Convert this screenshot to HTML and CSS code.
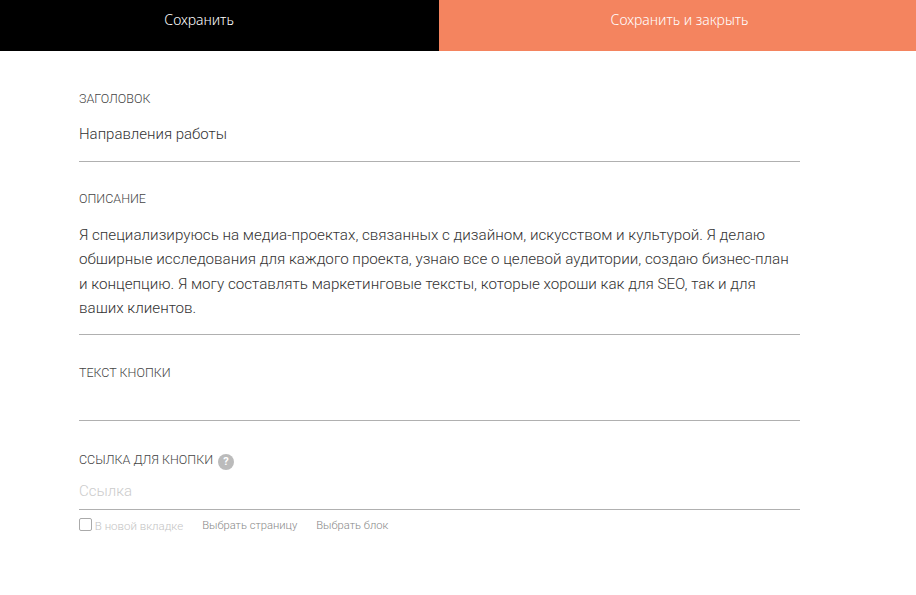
FILE: index.html
```html
<!DOCTYPE html>
<html lang="ru">
<head>
    <meta charset="UTF-8">
    <meta name="viewport" content="width=device-width, initial-scale=1.0">
    <title>Редактирование блока</title>
    <link rel="stylesheet" href="styles.css">
</head>
<body>

    <!-- Save buttons -->
    <div class="topbar">
        <button class="save-btn save">Сохранить</button>
        <button class="save-btn save-close">Сохранить и закрыть</button>
    </div>

    <form class="form">
        <div class="field field-title">
            <label class="field-label">Заголовок</label>
            <div class="field-value">Направления работы</div>
        </div>

        <div class="field field-descr">
            <label class="field-label">Описание</label>
            <div class="field-text">Я специализируюсь на медиа-проектах, связанных с дизайном, искусством и культурой. Я делаю обширные исследования для каждого проекта, узнаю все о целевой аудитории, создаю бизнес-план и концепцию. Я могу составлять маркетинговые тексты, которые хороши как для SEO, так и для ваших клиентов.</div>
        </div>

        <div class="field field-btn">
            <label class="field-label">Текст кнопки</label>
            <div class="field-value empty"></div>
        </div>

        <div class="field field-link">
            <label class="field-label">Ссылка для кнопки <span class="hint">?</span></label>
            <div class="field-value placeholder">Ссылка</div>
        </div>

        <div class="link-options">
            <label class="newtab"><input type="checkbox" class="newtab-check"> В новой вкладке</label>
            <a class="link-option">Выбрать страницу</a>
            <a class="link-option">Выбрать блок</a>
        </div>
    </form>

</body>
</html>
```

FILE: styles.css
```css
body {
    margin: 0;
    background-color: #fff;
    font-family: Roboto, "Liberation Sans", Arial, sans-serif;
    font-weight: 300;
    color: #333;
}

.topbar {
    display: flex;
    height: 51px;
}

.save-btn {
    border: none;
    padding: 0 0 12px;
    font-family: "Noto Sans", sans-serif;
    font-weight: 300;
    font-size: 14px;
    color: #fff;
}

.save {
    width: 439px;
    padding-right: 41px;
    background-color: #000;
}

.save-close {
    flex: 1;
    padding-left: 4px;
    background-color: #f4845f;
}

.form {
    width: 721px;
    margin-left: 79px;
    padding-top: 41px;
}

.field-label {
    display: block;
    height: 14px;
    font-size: 12.5px;
    line-height: 14px;
    text-transform: uppercase;
    color: #444;
}

.field-value {
    height: 37px;
    padding-top: 18px;
    font-size: 15px;
    line-height: 20px;
    border-bottom: 1px solid #b0b0b0;
}

.field-descr {
    margin-top: 30px;
}

.field-text {
    padding: 17px 0 13.4px;
    font-size: 15.2px;
    line-height: 24.4px;
    border-bottom: 1px solid #b0b0b0;
}

.field-btn {
    margin-top: 31px;
}

.empty {
    height: 22px;
}

.field-link {
    margin-top: 32px;
}

.placeholder {
    height: 28px;
    padding-top: 14px;
    color: #ccc;
}

.hint {
    display: inline-block;
    width: 16px;
    height: 16px;
    margin-left: 2px;
    border-radius: 50%;
    background-color: #bbb;
    color: #fff;
    font-size: 11px;
    line-height: 16px;
    font-weight: bold;
    text-align: center;
    vertical-align: -1px;
}

.link-options {
    display: flex;
    align-items: center;
    margin-top: 8px;
    font-size: 11.2px;
}

.newtab {
    color: #c4c4c4;
    margin-right: 19px;
    font-size: 11.5px;
}

.newtab-check {
    appearance: none;
    width: 13px;
    height: 13px;
    margin: 0;
    border: 1px solid #aaa;
    border-radius: 2px;
    vertical-align: -1px;
}

.link-option {
    margin-right: 19px;
    color: #888;
}
```
